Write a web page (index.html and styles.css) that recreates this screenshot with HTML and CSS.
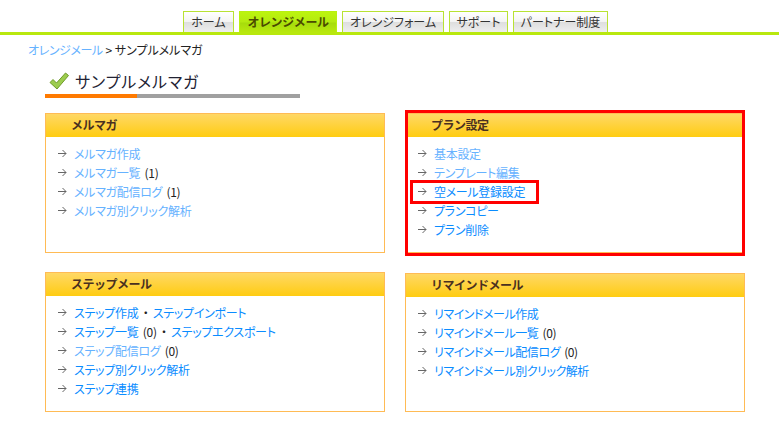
FILE: index.html
```html
<!DOCTYPE html>
<html lang="ja">
<head>
<meta charset="utf-8">
<title>サンプルメルマガ</title>
<link rel="stylesheet" href="styles.css">
</head>
<body>
<nav class="nav">
  <a class="tab">ホーム</a>
  <a class="tab tab-active">オレンジメール</a>
  <a class="tab">オレンジフォーム</a>
  <a class="tab">サポート</a>
  <a class="tab">パートナー制度</a>
</nav>
<main class="main">
  <p class="crumb"><a class="visited">オレンジメール</a> &gt; サンプルメルマガ</p>
  <h1 class="title">
    <svg class="check" width="20" height="18" viewBox="0 0 20 18"><path d="M1 10.5 L4 7.5 L7.5 11 L16.5 1 L19.5 3.5 L8 17 Z" fill="#9ccc4e" stroke="#6f9a2a" stroke-width="1"/></svg>
    サンプルメルマガ
  </h1>
  <div class="rule"><span class="rule-accent"></span></div>
  <div class="grid">
    <section class="card">
      <h2 class="card-head">メルマガ</h2>
      <ul class="list">
        <li class="row"><svg class="arrow" viewBox="0 0 9 9"><path d="M0 4.5H8M4.5 1L8 4.5L4.5 8" fill="none" stroke="#666"/></svg><a class="visited">メルマガ作成</a></li>
        <li class="row"><svg class="arrow" viewBox="0 0 9 9"><path d="M0 4.5H8M4.5 1L8 4.5L4.5 8" fill="none" stroke="#666"/></svg><a class="visited">メルマガ一覧</a> (1)</li>
        <li class="row"><svg class="arrow" viewBox="0 0 9 9"><path d="M0 4.5H8M4.5 1L8 4.5L4.5 8" fill="none" stroke="#666"/></svg><a class="visited">メルマガ配信ログ</a> (1)</li>
        <li class="row"><svg class="arrow" viewBox="0 0 9 9"><path d="M0 4.5H8M4.5 1L8 4.5L4.5 8" fill="none" stroke="#666"/></svg><a class="visited">メルマガ別クリック解析</a></li>
      </ul>
    </section>
    <section class="card card-marked">
      <h2 class="card-head">プラン設定</h2>
      <ul class="list">
        <li class="row"><svg class="arrow" viewBox="0 0 9 9"><path d="M0 4.5H8M4.5 1L8 4.5L4.5 8" fill="none" stroke="#666"/></svg><a class="visited">基本設定</a></li>
        <li class="row"><svg class="arrow" viewBox="0 0 9 9"><path d="M0 4.5H8M4.5 1L8 4.5L4.5 8" fill="none" stroke="#666"/></svg><a class="visited">テンプレート編集</a></li>
        <li class="row"><svg class="arrow" viewBox="0 0 9 9"><path d="M0 4.5H8M4.5 1L8 4.5L4.5 8" fill="none" stroke="#666"/></svg><a class="link">空メール登録設定</a></li>
        <li class="row"><svg class="arrow" viewBox="0 0 9 9"><path d="M0 4.5H8M4.5 1L8 4.5L4.5 8" fill="none" stroke="#666"/></svg><a class="link">プランコピー</a></li>
        <li class="row"><svg class="arrow" viewBox="0 0 9 9"><path d="M0 4.5H8M4.5 1L8 4.5L4.5 8" fill="none" stroke="#666"/></svg><a class="link">プラン削除</a></li>
      </ul>
      <div class="mark mark-card"></div>
      <div class="mark mark-row"></div>
    </section>
    <section class="card">
      <h2 class="card-head">ステップメール</h2>
      <ul class="list">
        <li class="row"><svg class="arrow" viewBox="0 0 9 9"><path d="M0 4.5H8M4.5 1L8 4.5L4.5 8" fill="none" stroke="#666"/></svg><a class="link">ステップ作成</a> ・ <a class="link">ステップインポート</a></li>
        <li class="row"><svg class="arrow" viewBox="0 0 9 9"><path d="M0 4.5H8M4.5 1L8 4.5L4.5 8" fill="none" stroke="#666"/></svg><a class="link">ステップ一覧</a> (0) ・ <a class="link">ステップエクスポート</a></li>
        <li class="row"><svg class="arrow" viewBox="0 0 9 9"><path d="M0 4.5H8M4.5 1L8 4.5L4.5 8" fill="none" stroke="#666"/></svg><a class="visited">ステップ配信ログ</a> (0)</li>
        <li class="row"><svg class="arrow" viewBox="0 0 9 9"><path d="M0 4.5H8M4.5 1L8 4.5L4.5 8" fill="none" stroke="#666"/></svg><a class="link">ステップ別クリック解析</a></li>
        <li class="row"><svg class="arrow" viewBox="0 0 9 9"><path d="M0 4.5H8M4.5 1L8 4.5L4.5 8" fill="none" stroke="#666"/></svg><a class="link">ステップ連携</a></li>
      </ul>
    </section>
    <section class="card card-low">
      <h2 class="card-head">リマインドメール</h2>
      <ul class="list">
        <li class="row"><svg class="arrow" viewBox="0 0 9 9"><path d="M0 4.5H8M4.5 1L8 4.5L4.5 8" fill="none" stroke="#666"/></svg><a class="link">リマインドメール作成</a></li>
        <li class="row"><svg class="arrow" viewBox="0 0 9 9"><path d="M0 4.5H8M4.5 1L8 4.5L4.5 8" fill="none" stroke="#666"/></svg><a class="link">リマインドメール一覧</a> (0)</li>
        <li class="row"><svg class="arrow" viewBox="0 0 9 9"><path d="M0 4.5H8M4.5 1L8 4.5L4.5 8" fill="none" stroke="#666"/></svg><a class="link">リマインドメール配信ログ</a> (0)</li>
        <li class="row"><svg class="arrow" viewBox="0 0 9 9"><path d="M0 4.5H8M4.5 1L8 4.5L4.5 8" fill="none" stroke="#666"/></svg><a class="link">リマインドメール別クリック解析</a></li>
      </ul>
    </section>
  </div>
</main>
</body>
</html>
```
FILE: styles.css
```css
* { box-sizing: border-box; }
html, body { margin: 0; padding: 0; background: #fff; }
body {
  width: 779px;
  height: 423px;
  overflow: hidden;
  font-family: "Noto Sans CJK JP", "Liberation Sans", sans-serif;
  font-size: 12px;
  font-feature-settings: "palt";
  color: #222;
}
.nav {
  display: flex;
  gap: 5px;
  height: 35px;
  padding: 11px 0 0 183px;
  border-bottom: 3px solid #b8e80e;
}
.tab {
  display: flex;
  align-items: center;
  justify-content: center;
  height: 21px;
  border: 1px solid #b8e233;
  border-bottom: 0;
  background: linear-gradient(#fff 0, #f4f4f4 48%, #dedede 52%, #eee 100%);
  color: #333;
  line-height: 1;
  white-space: nowrap;
}
.tab:nth-child(1) { width: 51px; }
.tab:nth-child(2) { width: 98px; }
.tab:nth-child(3) { width: 102px; }
.tab:nth-child(4) { width: 59px; }
.tab:nth-child(5) { width: 95px; }
.tab-active {
  border-color: #b8f010;
  background: linear-gradient(#bcf40e 0, #b4ea10 50%, #a6dc0c 55%, #b8e80e 100%);
  color: #4a4a00;
  font-weight: 700;
  font-feature-settings: normal;
  letter-spacing: -0.4px;
}
.main { padding-left: 45px; width: 745px; }
.crumb {
  margin: 6px 0 0 -17px;
  height: 18px;
  line-height: 18px;
  color: #222;
}
.crumb .visited { letter-spacing: -0.4px; }
.visited { color: #66b2ff; }
.link { color: #0a8cff; }
.title {
  display: flex;
  align-items: center;
  gap: 6px;
  margin: 10px 0 0 4px;
  height: 24px;
  font-size: 16px;
  font-weight: 400;
  color: #222233;
  letter-spacing: 0.9px;
}
.check { flex: none; }
.rule {
  width: 255px;
  height: 4px;
  margin-top: 1px;
  background: #a0a0a0;
}
.rule-accent {
  display: block;
  width: 92px;
  height: 4px;
  background: #ff7a00;
}
.grid {
  display: grid;
  grid-template-columns: 340px 340px;
  grid-auto-rows: 140px;
  column-gap: 20px;
  row-gap: 19px;
  margin-top: 15px;
}
.card {
  position: relative;
  border: 1px solid #ffbb55;
  background: #fff;
}
.card-low { margin-top: 1px; }
.card-head {
  margin: 0;
  height: 23px;
  padding-left: 25px;
  line-height: 22px;
  font-size: 12px;
  font-weight: 700;
  font-feature-settings: normal;
  letter-spacing: -0.5px;
  color: #4a3020;
  background: linear-gradient(#ffd866, #ffcc11);
}
.list {
  list-style: none;
  margin: 0;
  padding: 7px 0 0 12px;
}
.row {
  display: flex;
  align-items: center;
  height: 19px;
  white-space: pre;
  letter-spacing: -0.3px;
  word-spacing: 2px;
}
.card-low .row { letter-spacing: -0.45px; }
.arrow {
  flex: none;
  width: 9px;
  height: 9px;
  margin-right: 7px;
}
.mark {
  position: absolute;
  border: 3px solid #f00;
  pointer-events: none;
}
.mark-card { left: -1px; top: -4px; width: 340px; height: 146px; }
.mark-row { left: 4px; top: 66px; width: 129px; height: 24px; }
```
